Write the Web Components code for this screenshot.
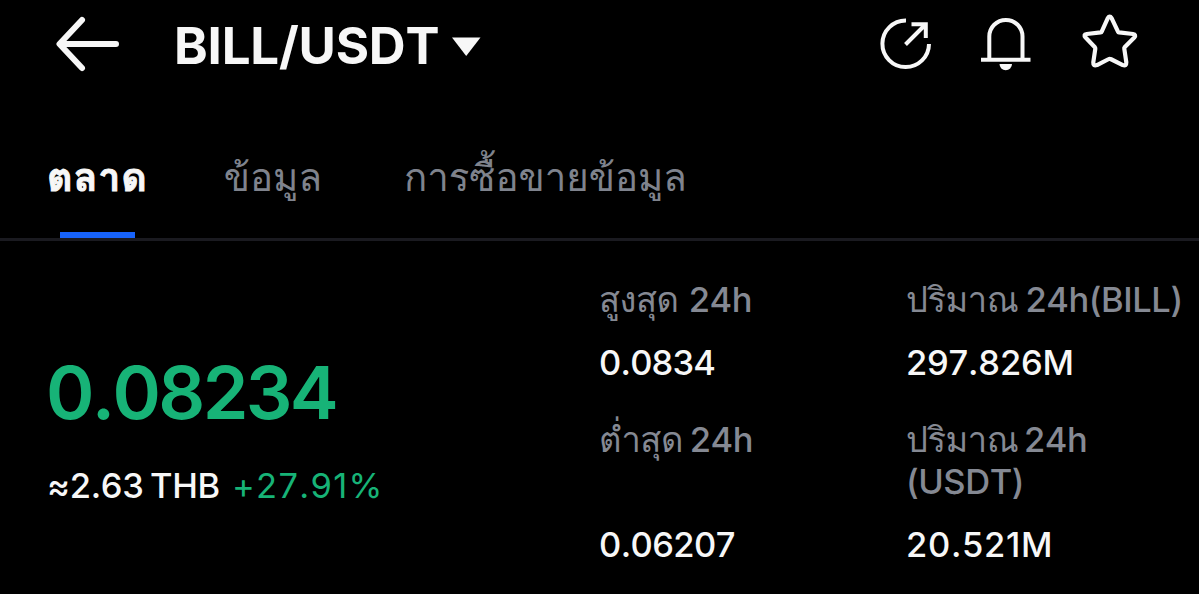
<!DOCTYPE html>
<html lang="th">
<head>
<meta charset="utf-8">
<title>BILL/USDT</title>
<style>
    body {
        margin: 0;
        background: #000;
        color: #f7f7f7;
        font-family: Inter, Loma, Garuda, "Noto Sans Thai", "Noto Sans", sans-serif;
        font-kerning: none;
    }
</style>
</head>
<body>

<template id="header-template">
    <style>
        :host {
            display: flex;
            align-items: flex-start;
            height: 90px;
            padding: 0 60px 0 52px;
        }

        svg {
            display: block;
            fill: none;
            stroke: currentColor;
        }

        .back {
            width: 72px;
            height: 90px;
        }

        .pair {
            display: flex;
            flex: 1;
            align-items: center;
            padding-left: 50px;
        }

        h1 {
            margin: 0;
            font-size: 51px;
            line-height: 92px;
            font-weight: 680;
            letter-spacing: -0.200px;
            white-space: nowrap;
        }

        .caret {
            width: 30px;
            height: 20px;
            margin-left: 12px;
            fill: currentColor;
            stroke: none;
        }

        .actions {
            display: flex;
            gap: 40px;
        }

        .actions svg {
            width: 60px;
            height: 90px;
        }

        .actions svg:last-child {
            margin-left: 2px;
        }
    </style>
    <svg class="back" viewBox="52 0 72 90" stroke-width="6" stroke-linecap="round" stroke-linejoin="round">
        <path d="M116 44H60M82 20L59.500 44L82 68"/>
    </svg>
    <div class="pair">
        <h1><slot></slot></h1>
        <svg class="caret" viewBox="0 0 30 20"><path d="M1 1.500H29.500L15.200 20z"/></svg>
    </div>
    <div class="actions">
        <svg viewBox="877 0 60 90" stroke-width="4">
            <path d="M906 20.500A23.300 23.300 0 1 0 929 44M905.500 44.500L925 25M911.500 24.300H925.800V38"/>
        </svg>
        <svg viewBox="977 0 60 90" stroke-width="4">
            <path d="M989.300 58V36.500A16.500 16.500 0 0 1 1022.500 36.500V58M981 59.700H1030.500"/>
            <path d="M999.500 64H1012A6.200 6.200 0 0 1 999.500 64z" fill="currentColor" stroke="none"/>
        </svg>
        <svg viewBox="1079 0 60 90" stroke-width="4.200" stroke-linejoin="round">
            <path d="M1107.800 18.200Q1109.700 15.200 1111.600 18.200L1118 31.600Q1118.300 32.300 1119 32.400L1133 34Q1136.500 34.500 1134.300 37.500L1124.600 47.300Q1124.100 47.900 1124.300 48.700L1126.300 62.300Q1126.500 66.500 1122.800 65.100L1110.600 59Q1109.700 58.500 1108.800 59L1097 65.100Q1093 66.500 1093.300 62.300L1095.300 48.700Q1095.400 47.900 1094.900 47.300L1085.600 37.500Q1083 34.500 1086.700 34L1100.600 32.400Q1101.400 32.300 1101.700 31.600z"/>
        </svg>
    </div>
</template>

<template id="tabs-template">
    <style>
        :host {
            display: flex;
            box-sizing: border-box;
            height: 151px;
            padding: 57px 47px 0;
            border-bottom: 3px solid #1a1a20;
        }
    </style>
    <slot></slot>
</template>

<template id="tab-template">
    <style>
        :host {
            display: flex;
            flex-direction: column;
            justify-content: space-between;
            align-items: center;
            color: #7f838d;
            font-family: Waree, Loma, Garuda, "Noto Sans Thai", sans-serif;
            font-size: 38.400px;
            line-height: 62px;
            white-space: nowrap;
        }

        :host([active]) {
            color: #f7f7f7;
            font-size: 39.500px;
            line-height: 60px;
            font-weight: 700;
            letter-spacing: 0.800px;
            -webkit-text-stroke: 1px currentColor;
        }

        :host([active])::after {
            content: "";
            width: 75px;
            height: 6px;
            background: #1763fb;
        }
    </style>
    <span><slot></slot></span>
</template>

<template id="price-template">
    <style>
        :host {
            display: block;
            padding-top: 74px;
        }

        .price {
            margin-left: -2px;
            color: #17b377;
            font-size: 73.500px;
            line-height: 80px;
            font-weight: 600;
            letter-spacing: -2.700px;
        }

        .row {
            display: flex;
            gap: 12px;
            margin: 32px 0 0 -1px;
            font-size: 34.500px;
            line-height: 42px;
            font-weight: 500;
            white-space: nowrap;
        }

        .fiat {
            letter-spacing: -0.300px;
            word-spacing: -2.500px;
        }

        .change {
            color: #17b377;
            font-weight: 420;
            letter-spacing: 1.300px;
        }
    </style>
    <div class="price"><slot></slot></div>
    <div class="row">
        <span class="fiat"><slot name="fiat"></slot></span>
        <span class="change"><slot name="change"></slot></span>
    </div>
</template>

<template id="stat-template">
    <style>
        :host {
            display: flex;
            flex-direction: column;
            justify-content: space-between;
            gap: 21px;
            font-size: 34.500px;
            line-height: 42px;
            font-weight: 500;
            white-space: nowrap;
        }

        .label {
            color: #858993;
            letter-spacing: -0.450px;
            word-spacing: var(--label-gap, 0);
        }

        .value {
            letter-spacing: var(--value-spacing, 0);
        }
    </style>
    <div class="label"><slot name="label"></slot></div>
    <div class="value"><slot></slot></div>
</template>

<template id="ticker-template">
    <style>
        :host {
            display: grid;
            grid-template-columns: 551px 1fr;
            padding: 38px 0 0 48px;
        }

        .stats {
            display: grid;
            grid-template-columns: 307px 1fr;
            row-gap: 35px;
        }
    </style>
    <slot name="price"></slot>
    <div class="stats"><slot></slot></div>
</template>

<pair-header>BILL/USDT</pair-header>

<tab-bar>
    <tab-item active>ตลาด</tab-item>
    <tab-item style="margin-left: 76px">ข้อมูล</tab-item>
    <tab-item style="margin-left: 82px">การซื้อขายข้อมูล</tab-item>
</tab-bar>

<pair-ticker>
    <last-price slot="price">0.08234<span slot="fiat">≈2.63 THB</span><span slot="change">+27.91%</span></last-price>
    <stat-cell style="--label-gap: 1.500px; --value-spacing: -0.800px"><span slot="label">สูงสุด 24h</span>0.0834</stat-cell>
    <stat-cell style="--label-gap: -1.500px; --value-spacing: -0.200px"><span slot="label">ปริมาณ 24h(BILL)</span>297.826M</stat-cell>
    <stat-cell style="--label-gap: -2px; --value-spacing: -0.600px"><span slot="label">ต่ำสุด 24h</span>0.06207</stat-cell>
    <stat-cell style="--label-gap: -3px; --value-spacing: 0.700px"><span slot="label">ปริมาณ 24h<br>(USDT)</span>20.521M</stat-cell>
</pair-ticker>

<script>
    class TemplateElement extends HTMLElement {
        connectedCallback() {
            if (this.shadowRoot) return;
            const shadowRoot = this.attachShadow({ mode: "open" });
            const template = document.getElementById(this.constructor.template).content;
            shadowRoot.appendChild(template.cloneNode(true));
        }
    }

    class PairHeader extends TemplateElement {}
    PairHeader.template = 'header-template';

    class TabBar extends TemplateElement {}
    TabBar.template = 'tabs-template';

    class TabItem extends TemplateElement {}
    TabItem.template = 'tab-template';

    class PairTicker extends TemplateElement {}
    PairTicker.template = 'ticker-template';

    class LastPrice extends TemplateElement {}
    LastPrice.template = 'price-template';

    class StatCell extends TemplateElement {}
    StatCell.template = 'stat-template';

    customElements.define('pair-header', PairHeader);
    customElements.define('tab-bar', TabBar);
    customElements.define('tab-item', TabItem);
    customElements.define('pair-ticker', PairTicker);
    customElements.define('last-price', LastPrice);
    customElements.define('stat-cell', StatCell);
</script>
</body>
</html>
